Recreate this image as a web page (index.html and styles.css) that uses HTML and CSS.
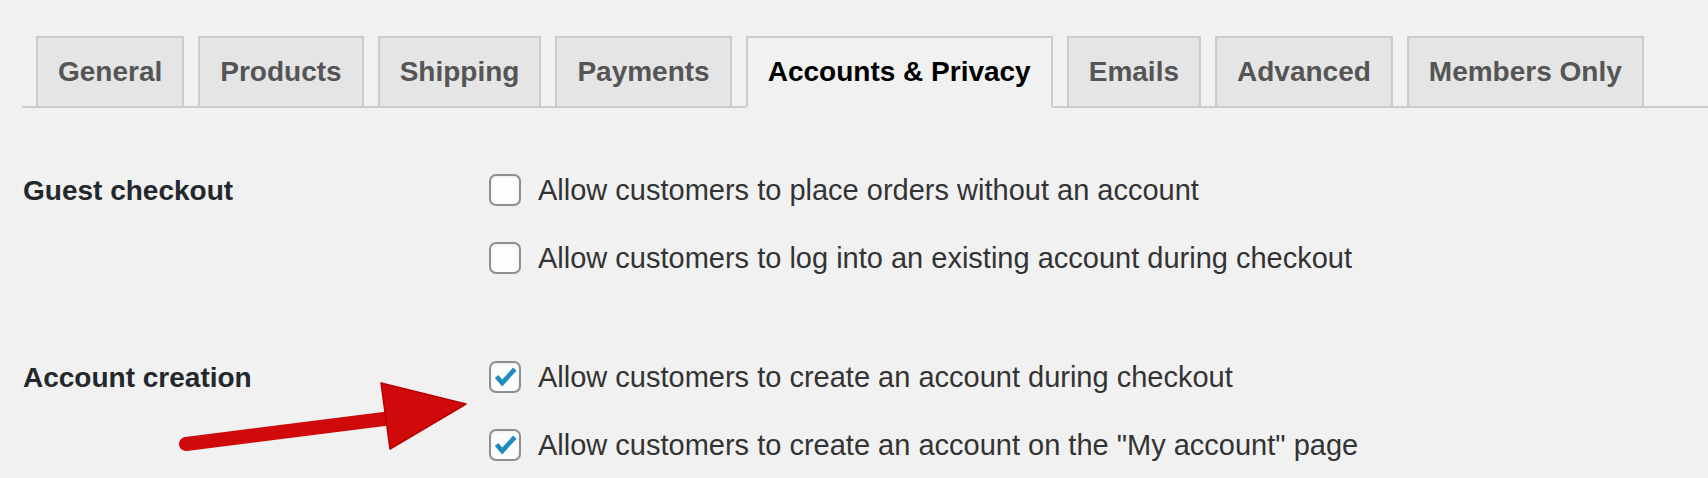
FILE: index.html
```html
<!DOCTYPE html>
<html lang="en">
<head>
<meta charset="utf-8">
<title>Accounts &amp; Privacy</title>
<link rel="stylesheet" href="styles.css">
</head>
<body>
<div class="page">
  <nav class="tabs">
    <a class="tab">General</a>
    <a class="tab">Products</a>
    <a class="tab">Shipping</a>
    <a class="tab">Payments</a>
    <a class="tab active">Accounts &amp; Privacy</a>
    <a class="tab">Emails</a>
    <a class="tab">Advanced</a>
    <a class="tab">Members Only</a>
  </nav>

  <div class="settings">
    <div class="group">
      <div class="label">Guest checkout</div>
      <div class="options">
        <div class="option"><span class="cb"></span><span class="text">Allow customers to place orders without an account</span></div>
        <div class="option"><span class="cb"></span><span class="text">Allow customers to log into an existing account during checkout</span></div>
      </div>
    </div>
    <div class="group second">
      <div class="label">Account creation</div>
      <div class="options">
        <div class="option"><span class="cb checked"><svg viewBox="0 0 30 30"><path d="M6 14.5 L12 21.5 L25.5 6.5"/></svg></span><span class="text">Allow customers to create an account during checkout</span></div>
        <div class="option"><span class="cb checked"><svg viewBox="0 0 30 30"><path d="M6 14.5 L12 21.5 L25.5 6.5"/></svg></span><span class="text">Allow customers to create an account on the "My account" page</span></div>
      </div>
    </div>
  </div>

  <svg class="arrow" viewBox="0 0 1708 478" width="1708" height="478">
    <line x1="186" y1="444" x2="392" y2="418" stroke="#d00a0a" stroke-width="14" stroke-linecap="round"/>
    <polygon points="381,383 466,404 390,449" fill="#d00a0a" stroke="#b80000" stroke-width="1.5" stroke-linejoin="round"/>
  </svg>
</div>
</body>
</html>
```

FILE: styles.css
```css
html, body {
  margin: 0;
  padding: 0;
  background: #f1f1f1;
}

.page {
  position: relative;
  width: 1708px;
  height: 478px;
  overflow: hidden;
  font-family: "Liberation Sans", Arial, sans-serif;
}

.tabs {
  display: flex;
  margin-left: 22px;
  padding-top: 36px;
  border-bottom: 2px solid #cccccc;
}

.tab {
  display: block;
  margin-left: 14px;
  margin-bottom: -2px;
  padding: 10px 20px;
  line-height: 48px;
  font-size: 28px;
  font-weight: bold;
  color: #555555;
  background: #e5e5e5;
  border: 2px solid #cccccc;
  text-decoration: none;
  white-space: nowrap;
}

.tab.active {
  color: #000000;
  background: #f1f1f1;
  border-bottom-color: #f1f1f1;
}

.settings {
  padding-left: 23px;
  margin-top: 48px;
}

.group {
  display: grid;
  grid-template-columns: 466px 1fr;
}

.group.second {
  margin-top: 51px;
}

.label {
  height: 68px;
  line-height: 70px;
  font-size: 28px;
  font-weight: bold;
  color: #23282d;
}

.option {
  display: flex;
  align-items: center;
  height: 68px;
}

.cb {
  box-sizing: border-box;
  width: 32px;
  height: 32px;
  flex: none;
  border: 2px solid #8c8f94;
  border-radius: 7px;
  background: #fdfdfd;
  box-shadow: inset 0 1px 3px rgba(0, 0, 0, 0.08);
  display: flex;
  align-items: center;
  justify-content: center;
}

.cb svg {
  width: 28px;
  height: 28px;
}

.cb svg path {
  fill: none;
  stroke: #1e8cbe;
  stroke-width: 5;
  stroke-linecap: butt;
  stroke-linejoin: miter;
}

.text {
  margin-left: 17px;
  font-size: 29px;
  color: #333333;
  white-space: nowrap;
}

.arrow {
  position: absolute;
  left: 0;
  top: 0;
  pointer-events: none;
}
```
